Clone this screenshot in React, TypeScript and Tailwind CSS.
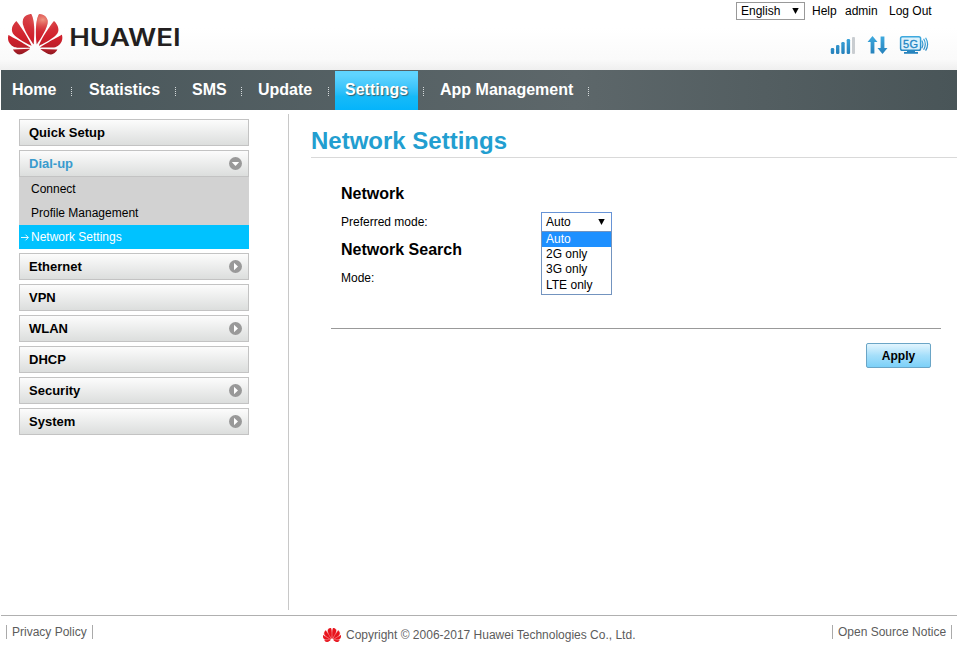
import { type FC } from "react";
import clsx from "clsx";

interface MenuItem {
	label: string;
	arrow?: "right" | "down";
	children?: string[];
}

const navItems = ["Home", "Statistics", "SMS", "Update", "Settings", "App Management"];

const navWidths: Record<string, string> = {
	Home: "w-[71px] pl-[11px]",
	Statistics: "w-[104px] pl-[17px]",
	SMS: "w-[66px] pl-[16px]",
	Update: "w-[87px] pl-[16px]",
	Settings: "w-[95px] pl-[6px]",
	"App Management": "w-[165px] pl-[16px]",
};

const menu: MenuItem[] = [
	{ label: "Quick Setup" },
	{
		label: "Dial-up",
		arrow: "down",
		children: ["Connect", "Profile Management", "Network Settings"],
	},
	{ label: "Ethernet", arrow: "right" },
	{ label: "VPN" },
	{ label: "WLAN", arrow: "right" },
	{ label: "DHCP" },
	{ label: "Security", arrow: "right" },
	{ label: "System", arrow: "right" },
];

const modes = ["Auto", "2G only", "3G only", "LTE only"];

const petals =
	"M3.67 6.14S1.82 7.91 1.72 9.78v.35c.08 1.51 1.22 2.4 1.22 2.4 1.83 1.79 6.26 4.04 7.3 4.55 0 0 .06.03.1-.01l.02-.04v-.04C7.52 10.8 3.67 6.14 3.67 6.14zM9.65 18.6c-.02-.08-.1-.08-.1-.08l-7.38.26c.8 1.43 2.15 2.53 3.56 2.2.96-.25 3.16-1.78 3.88-2.3.06-.05.04-.09.04-.09zm.08-.78C6.49 15.63.21 12.28.21 12.28c-.15.46-.2.9-.21 1.3v.07c0 1.07.4 1.82.4 1.82.8 1.69 2.34 2.2 2.34 2.2.7.3 1.4.31 1.4.31.12.02 4.4 0 5.54 0 .05 0 .08-.05.08-.05v-.06c0-.03-.03-.05-.03-.05zM9.06 3.19a3.42 3.42 0 00-2.57 3.15v.41c.03.6.16 1.05.16 1.05.66 2.9 3.86 7.65 4.55 8.65.05.05.1.03.1.03a.1.1 0 00.06-.1c1.06-10.6-1.11-13.42-1.11-13.42-.32.02-1.19.23-1.19.23zm8.299 2.27s-.49-1.8-2.44-2.28c0 0-.57-.14-1.17-.22 0 0-2.18 2.81-1.12 13.43.01.07.06.08.06.08.07.03.1-.03.1-.03.72-1.03 3.9-5.76 4.55-8.64 0 0 .36-1.4.02-2.34zm-2.92 13.07s-.07 0-.09.05c0 0-.01.07.03.1.7.51 2.85 2 3.88 2.3 0 0 .16.05.43.06h.14c.69-.02 1.9-.37 3-2.26l-7.4-.25zm7.83-8.41c.14-2.06-1.94-3.97-1.94-3.98 0 0-3.85 4.66-6.67 10.8 0 0-.03.08.02.13l.04.01h.06c1.06-.53 5.46-2.77 7.28-4.54 0 0 1.15-.93 1.21-2.42zm1.52 2.14s-6.28 3.37-9.52 5.55c0 0-.05.04-.03.11 0 0 .03.06.07.06 1.16 0 5.56 0 5.67-.02 0 0 .57-.02 1.27-.29 0 0 1.56-.5 2.37-2.27 0 0 .73-1.45.17-3.14z";

const Logo: FC = () => (
	<svg width="174" height="42" viewBox="0 0 174 42" className="mt-[14px] ml-[8px]">
		<defs>
			<linearGradient id="red" x1="0" y1="0" x2="0" y2="1">
				<stop offset="0" stopColor="#d8454a" />
				<stop offset="0.6" stopColor="#d01f2b" />
				<stop offset="0.85" stopColor="#b81f2a" />
				<stop offset="1" stopColor="#8e1a22" />
			</linearGradient>
			<radialGradient id="shine" cx="0.64" cy="0.14" r="0.3">
				<stop offset="0" stopColor="#f3a58c" stopOpacity="0.85" />
				<stop offset="1" stopColor="#e2514c" stopOpacity="0" />
			</radialGradient>
		</defs>
		<g transform="scale(2.265 2.24) translate(0 -2.96)">
			<path d={petals} fill="url(#red)" />
			<path d={petals} fill="url(#shine)" />
		</g>
		<text
			x="61.2"
			y="32.1"
			fontFamily="Inter, sans-serif"
			fontWeight="600"
			fontSize="24"
			textLength="111.5"
			lengthAdjust="spacingAndGlyphs"
			fill="#231f20"
		>
			HUAWEI
		</text>
	</svg>
);

const StatusIcons: FC = () => (
	<svg width="100" height="22" viewBox="830 34 100 22">
		<defs>
			<linearGradient id="blue" gradientUnits="userSpaceOnUse" x1="0" y1="36" x2="0" y2="54">
				<stop offset="0" stopColor="#3eaadf" />
				<stop offset="1" stopColor="#2580bb" />
			</linearGradient>
		</defs>
		<g fill="url(#blue)">
			<rect x="830.8" y="48" width="3.4" height="6" rx="1.2" />
			<rect x="836" y="45" width="3.4" height="9" rx="1.2" />
			<rect x="841.3" y="42" width="3.4" height="12" rx="1.2" />
			<rect x="846.7" y="39" width="3.4" height="15" rx="1.2" />
			<rect x="852" y="37" width="3" height="17" rx="1" fill="#c9cdd1" />
			<path d="M872.5 36l5 6h-3.1v11.5h-3.8V42h-3.1z" />
			<path d="M882.5 54l-5-6h3.1V36.5h3.8V48h3.1z" />
			<path d="M907 50h8v2h3v1.8h-14V52h3z" />
		</g>
		<g fill="none" stroke="url(#blue)">
			<rect x="900.6" y="36.8" width="20" height="13.4" rx="1.8" strokeWidth="1.5" fill="#dcf1fb" />
			<path d="M921.8 40.5q2.2 3.8 0 7.6M923.6 38.8q3.4 5.4 0 11M925.6 37.8q4 6.4 0 12.8" strokeWidth="1.2" />
		</g>
		<text
			x="910.6"
			y="47.6"
			textAnchor="middle"
			fontFamily="Liberation Sans, sans-serif"
			fontSize="11"
			textLength="15"
			fill="#1f86c4"
			stroke="#1f86c4"
			strokeWidth="0.3"
		>
			5G
		</text>
	</svg>
);

const Arrow: FC<{ dir: "right" | "down" }> = ({ dir }) => (
	<svg width="13" height="13" viewBox="0 0 13 13" className={clsx(dir === "down" && "rotate-90")}>
		<circle cx="6.5" cy="6.5" r="6.5" fill="#999" />
		<path d="M5 2.8L9 6.5L5 10.2z" fill="#fff" />
	</svg>
);

const Header: FC = () => (
	<header className="h-[70px] flex justify-between bg-linear-to-b from-white from-40% via-[#fafafa] via-85% to-[#efefef]">
		<Logo />
		<div className="w-[221px] pt-[2px]">
			<div className="flex items-center h-[18px]">
				<div className="w-[69px] h-[18px] border border-[#999] bg-white flex items-center justify-between pl-1 pr-[5px]">
					<span>English</span>
					<Caret />
				</div>
				<span className="w-[25px] ml-[7px]">Help</span>
				<span className="w-[33px] ml-2">admin</span>
				<span className="ml-[11px] whitespace-nowrap">Log Out</span>
			</div>
			<div className="mt-[14px] ml-[94px]">
				<StatusIcons />
			</div>
		</div>
	</header>
);

const Caret: FC = () => (
	<svg width="7" height="6" viewBox="0 0 7 6">
		<path d="M0.3 0h6.4L3.5 6z" fill="#000" />
	</svg>
);

const Nav: FC = () => (
	<nav className="ml-px h-10 flex bg-linear-to-r from-[#48565a] via-[#5d676a] via-60% to-[#495558] text-white text-[16px] leading-[39px] font-bold">
		{navItems.map((item) => (
			<div key={item} className={clsx("flex justify-between flex-none", navWidths[item])}>
				{item === "Settings" ? (
					<div className="w-[83px] mt-px pl-[10px] leading-[37px] bg-linear-to-b from-[#5fd4ff] from-10% via-[#16baf8] via-65% to-[#04b4fb] [text-shadow:1px_1px_1px_#35616f]">
						{item}
					</div>
				) : (
					<span className="whitespace-nowrap">{item}</span>
				)}
				<span className="w-px h-[9px] mt-[17px] bg-[repeating-linear-gradient(#d5dadb_0_1px,transparent_1px_2px)]" />
			</div>
		))}
	</nav>
);

const Sidebar: FC = () => (
	<aside className="w-[289px] h-[496px] mt-1 pt-[5px] pl-[19px] pr-[39px] border-r border-[#c8c8c8] flex flex-col gap-1 flex-none">
		{menu.map((item) => (
			<div key={item.label}>
				<div
					className={clsx(
						"h-[27px] flex items-center justify-between border border-[#c3c3c3] pl-[9px] pr-[6px] text-[13px] font-bold bg-linear-to-b from-[#fcfcfc] to-[#dcdedd]",
						item.children && "text-[#399bce]",
					)}
				>
					{item.label}
					{item.arrow && <Arrow dir={item.arrow} />}
				</div>
				{item.children?.map((child) => (
					<div
						key={child}
						className={clsx(
							"h-6 flex items-center",
							child === "Network Settings" ? "bg-[#00c2ff] text-white" : "bg-[#d2d2d2]",
						)}
					>
						<span className="w-3 pl-[2px]">
							{child === "Network Settings" && (
								<svg width="8" height="7" viewBox="0 0 8 7" fill="none" stroke="#fff" strokeWidth="0.9">
									<path d="M0 3.5h7.2M4.5 0.7l2.8 2.8l-2.8 2.8" />
								</svg>
							)}
						</span>
						{child}
					</div>
				))}
			</div>
		))}
	</aside>
);

const Content: FC = () => (
	<main className="flex-1 pl-[22px]">
		<h1 className="h-[48px] pt-[15px] text-[24px] leading-8 font-bold text-[#229ed0] border-b border-[#d9d9d9]">
			Network Settings
		</h1>
		<div className="ml-[20px] mr-4 h-[171px] pl-[10px] pt-[26px] border-b border-[#999]">
			<h2 className="text-[16px] leading-5 font-bold">Network</h2>
			<div className="flex mt-[8px] h-5 items-center">
				<span className="w-[200px]">Preferred mode:</span>
				<div className="relative w-[71px] h-5">
					<div className="h-5 border border-[#6793d6] bg-white flex items-center justify-between pl-1 pr-[6px]">
						Auto
						<Caret />
					</div>
					<ul className="absolute top-[18.5px] left-0 w-[71px] h-[64px] border border-[#7394bf] bg-white leading-[15.4px]">
						{modes.map((mode) => (
							<li key={mode} className={clsx("pl-1", mode === "Auto" && "bg-[#1e90ff] text-white")}>
								{mode}
							</li>
						))}
					</ul>
				</div>
			</div>
			<h2 className="mt-[8px] text-[16px] leading-5 font-bold">Network Search</h2>
			<div className="mt-[8px] leading-5">Mode:</div>
		</div>
		<div className="flex justify-end mt-[14px] mr-[26px]">
			<button className="w-[65px] h-[25px] rounded-[2px] border border-[#6aa5c6] bg-linear-to-b from-[#e2f5fe] via-[#a5dffa] via-50% to-[#7bd0f8] text-[12px] font-bold">
				Apply
			</button>
		</div>
	</main>
);

const Footer: FC = () => (
	<footer className="ml-px mt-[5px] h-[33px] border-t border-[#b0b0b0] flex justify-between text-[#5c5c5c] leading-[14px]">
		<span className="h-[14px] mt-[9px] ml-[5px] w-[87px] pl-[5px] border-x border-[#aaa] whitespace-nowrap">
			Privacy Policy
		</span>
		<div className="flex mt-[12px] ml-[34px]">
			<svg width="18" height="14" viewBox="0 2.9 24 18.2" preserveAspectRatio="none" className="mr-[5px]">
				<path d={petals} fill="#e8141c" stroke="#e8141c" strokeWidth="0.6" />
			</svg>
			<span className="w-[290px] whitespace-nowrap">
				Copyright © 2006-2017 Huawei Technologies Co., Ltd.
			</span>
		</div>
		<span className="h-[14px] mt-[9px] mr-[5px] w-[120px] pl-[5px] border-x border-[#aaa] whitespace-nowrap">
			Open Source Notice
		</span>
	</footer>
);

export default function App() {
	return (
		<div className="w-[957px] h-[648px] overflow-hidden bg-white text-black text-[12px] leading-[14px] font-['Liberation_Sans',Arial,sans-serif]">
			<Header />
			<Nav />
			<div className="flex">
				<Sidebar />
				<Content />
			</div>
			<Footer />
		</div>
	);
}
